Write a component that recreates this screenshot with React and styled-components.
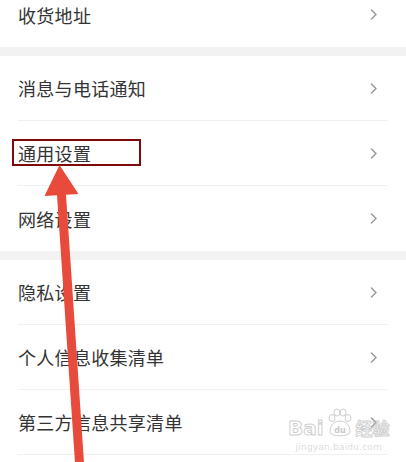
import React from 'react';
import styled, { createGlobalStyle } from 'styled-components';

const GlobalStyle = createGlobalStyle`
  html, body {
    margin: 0;
    padding: 0;
    background: #ffffff;
  }
  body {
    font-family: "Noto Sans CJK SC", "Noto Sans", sans-serif;
  }
`;

const Page = styled.div`
  position: relative;
  width: 406px;
  height: 462px;
  overflow: hidden;
  background: #ffffff;
`;

const List = styled.div`
  display: flex;
  flex-direction: column;
  margin-top: -18px;
`;

const Group = styled.div`
  display: flex;
  flex-direction: column;
  background: #ffffff;
`;

const Band = styled.div`
  height: 9px;
  background: #f2f2f2;
`;

const Row = styled.div`
  display: flex;
  align-items: center;
  justify-content: space-between;
  height: 65px;
  box-sizing: border-box;
  margin-left: 18px;
  margin-right: 18px;
  padding-right: 10px;
  border-bottom: ${(p) => (p.$divider ? '1px solid #f0f0f0' : 'none')};
`;

const Label = styled.span`
  font-size: 18px;
  color: #333333;
  letter-spacing: 0.3px;
`;

const Chevron = () => (
  <svg width="8" height="11" viewBox="0 0 8 11">
    <polyline
      points="1.5,1 6,5.5 1.5,10"
      fill="none"
      stroke="#9a9a9a"
      strokeWidth="1.5"
      strokeLinecap="round"
      strokeLinejoin="round"
    />
  </svg>
);

const Highlight = styled.div`
  position: absolute;
  left: 12px;
  top: 139px;
  width: 125px;
  height: 23px;
  border: 2.5px solid #7d0a0a;
`;

const ArrowLayer = styled.svg`
  position: absolute;
  left: 0;
  top: 0;
  pointer-events: none;
`;

const Watermark = styled.div`
  position: absolute;
  left: 288px;
  top: 408px;
  display: flex;
  flex-direction: column;
  align-items: center;
  color: rgba(190, 190, 190, 0.55);
  font-family: "DejaVu Sans", sans-serif;
`;

const MarkTop = styled.div`
  display: flex;
  align-items: flex-end;
  gap: 2px;
  font-size: 20px;
  font-weight: bold;
  line-height: 20px;
  color: transparent;
  -webkit-text-stroke: 1px rgba(185, 185, 185, 0.7);
`;

const MarkCjk = styled.span`
  font-family: "Noto Sans CJK SC", sans-serif;
  font-size: 17px;
`;

const MarkUrl = styled.div`
  font-size: 9px;
  line-height: 12px;
  margin-top: 3px;
  letter-spacing: 0.2px;
`;

const Paw = () => (
  <svg width="28" height="30" viewBox="0 0 28 30">
    <g fill="none" stroke="rgba(185,185,185,0.7)" strokeWidth="1">
      <ellipse cx="6" cy="10" rx="3" ry="3.5" />
      <ellipse cx="11" cy="4.5" rx="3" ry="3.5" />
      <ellipse cx="17" cy="4.5" rx="3" ry="3.5" />
      <ellipse cx="22" cy="10" rx="3" ry="3.5" />
      <path d="M4 24 C4 16 9 13 14 13 C19 13 24 16 24 24 C24 29 4 29 4 24 Z" />
    </g>
    <text x="14" y="25" textAnchor="middle" fontSize="8" fill="rgba(185,185,185,0.8)" fontFamily="DejaVu Sans">du</text>
  </svg>
);

const groups = [
  { items: ['收货地址'], trailing: false },
  { items: ['消息与电话通知', '通用设置', '网络设置'], trailing: false },
  { items: ['隐私设置', '个人信息收集清单', '第三方信息共享清单'], trailing: true },
];

export default function App() {
  return (
    <Page>
      <GlobalStyle />
      <List>
        {groups.map((group, gi) => (
          <React.Fragment key={gi}>
            {gi > 0 && <Band />}
            <Group>
              {group.items.map((label, i) => (
                <Row
                  key={label}
                  $divider={group.trailing || i < group.items.length - 1}
                >
                  <Label>{label}</Label>
                  <Chevron />
                </Row>
              ))}
            </Group>
          </React.Fragment>
        ))}
      </List>
      <Highlight />
      <ArrowLayer width="406" height="462" viewBox="0 0 406 462">
        <polygon
          fill="#e84a3b"
          points="59.5,165 78.5,194 66,194.7 84.5,470 75.5,470 57,195.3 44.5,196"
        />
      </ArrowLayer>
      <Watermark>
        <MarkTop>
          <span>Bai</span>
          <Paw />
          <MarkCjk>经验</MarkCjk>
        </MarkTop>
        <MarkUrl>jingyan.baidu.com</MarkUrl>
      </Watermark>
    </Page>
  );
}
